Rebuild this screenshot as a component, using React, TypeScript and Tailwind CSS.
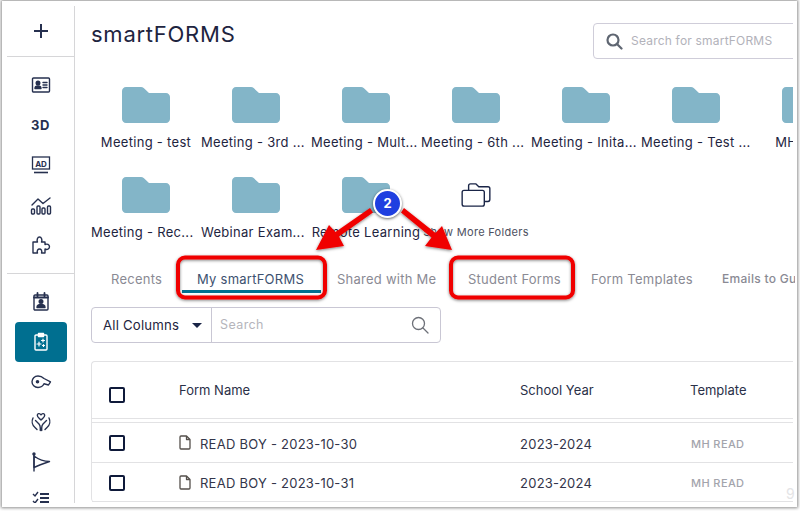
import React from "react";

const FONT = "font-['Inter','Liberation_Sans',sans-serif]";

function Folder() {
  return (
    <svg width="48" height="36" viewBox="0 0 48 36" className="block">
      <path d="M4 0H19C20 0 21 .4 21.700 1.100L27 6H44C46.200 6 48 7.800 48 10V32C48 34.200 46.200 36 44 36H4C1.800 36 0 34.200 0 32V4C0 1.800 1.800 0 4 0Z" fill="#83b5c8" />
    </svg>
  );
}

function FolderCell({ label, cut }: { label: string; cut?: boolean }) {
  return (
    <div className="w-[110px] shrink-0 h-[90px] flex flex-col items-center pt-[2px]">
      <Folder />
      <div className={"mt-[10px] text-[13px] leading-[18px] tracking-[0.3px] text-[#1e2440] whitespace-nowrap " + (cut ? "self-start" : "")}>{label}</div>
    </div>
  );
}

const navy = "#26304f";

function Ico({ children, w = 22, h = 22, color = navy }: { children: React.ReactNode; w?: number; h?: number; color?: string }) {
  return (
    <svg width={w} height={h} viewBox="0 0 22 22" fill="none" stroke={color} strokeWidth="1.4" strokeLinecap="round" strokeLinejoin="round">
      {children}
    </svg>
  );
}

function NavItem({ children, active }: { children: React.ReactNode; active?: boolean }) {
  return (
    <div className={active ? "w-[52px] h-[40px] shrink-0 rounded-[4px] bg-[#006f90] flex items-center justify-center" : "w-[52px] h-[40px] shrink-0 flex items-center justify-center"}>
      {children}
    </div>
  );
}

function Checkbox() {
  return <div className="w-[16px] h-[16px] rounded-[2px] border-2 border-[#0f1a3a] bg-white shrink-0" />;
}

function Row({ date, last }: { date: string; last?: boolean }) {
  return (
    <div className={"h-[40px] flex items-center border-t border-[#e2e2e4] " + (last ? "border-b" : "")}>
      <div className="w-[87px] shrink-0 pl-[17px] mt-[1px]"><Checkbox /></div>
      <div className="w-[341px] shrink-0 flex items-center pt-[4px] text-[13px] tracking-[0.25px] text-[#33354a]">
        <svg width="12" height="15" viewBox="0 0 12 15" fill="none" stroke="#55504c" strokeWidth="1.3" className="mr-[9px] -mt-[4px]" strokeLinejoin="round">
          <path d="M1 2C1 1.400 1.400 1 2 1H7.500L11 4.500V13C11 13.600 10.600 14 10 14H2C1.400 14 1 13.600 1 13Z" />
          <path d="M7.500 1V4.500H11" />
        </svg>
        READ BOY - {date}
      </div>
      <div className="w-[170px] shrink-0 pt-[4px] text-[13px] tracking-[0.25px] text-[#33354a]">2023-2024</div>
      <div className="pt-[3px] pl-[1px] text-[11px] tracking-[0.4px] font-medium text-[#a3a4ac]">MH READ</div>
    </div>
  );
}

export default function App() {
  return (
    <div className={"relative w-[800px] h-[511px] overflow-hidden bg-white " + FONT}>
      <div className="ml-[2px] mt-[1px] w-[795px] h-[506px] bg-white flex shadow-[0_0_3px_1px_rgba(0,0,0,0.45)] overflow-hidden">
        {/* Sidebar */}
        <aside className="w-[73px] shrink-0 pt-[5px] pb-[4px] pl-[5px] flex flex-col">
          <div className="flex-1 border-r border-[#d6d6d8] flex flex-col items-center overflow-hidden">
            <div className="h-[51px] w-full flex items-center justify-center shrink-0 border-b border-[#d6d6d8]">
              <svg width="14" height="14" viewBox="0 0 14 14" stroke="#26304f" strokeWidth="2"><path d="M7 0V14M0 7H14" /></svg>
            </div>
            <div className="flex flex-col items-center pt-[8px] h-[217px] w-full shrink-0 border-b border-[#d6d6d8]">
              <NavItem>
                <Ico>
                  <rect x="2.500" y="4" width="17" height="14" rx="1" />
                  <circle cx="8" cy="9" r="1.800" fill={navy} />
                  <path d="M5 14.500C5 12.500 6.500 12 8 12S11 12.500 11 14.500Z" fill={navy} />
                  <path d="M13 8.500H17M13 11H17M13 13.500H17" />
                </Ico>
              </NavItem>
              <NavItem><span className="text-[13px] font-bold tracking-[0.6px] text-[#26304f] mt-[1px]">3D</span></NavItem>
              <NavItem>
                <svg width="20" height="20" viewBox="0 0 20 20" fill="none" stroke={navy} strokeWidth="1.300">
                  <rect x="1.500" y="2" width="17" height="12" />
                  <path d="M3 17.500H17" strokeWidth="1.600" />
                  <text x="10" y="11.500" textAnchor="middle" fontSize="8" fontWeight="700" fill={navy} stroke="none" fontFamily="Inter">AD</text>
                </svg>
              </NavItem>
              <NavItem>
                <Ico>
                  <rect x="1.500" y="15" width="3" height="5" rx="1" />
                  <rect x="7" y="12" width="3" height="8" rx="1" />
                  <rect x="12" y="14" width="3" height="6" rx="1" />
                  <rect x="17.500" y="12" width="3" height="8" rx="1" />
                  <path d="M2 11L8 5L13 9.500L20 4" />
                </Ico>
              </NavItem>
              <NavItem>
                <Ico>
                  <path d="M3 19V8H7.500C6.500 6 7.500 3 9.500 3S12.500 6 11.500 8H15V10.500C17 9.500 19.500 10.500 19.500 12.800S17 16 15 15V19H11.500C12.500 16.500 11 15 9.500 15S6.500 16.500 7.500 19Z" />
                </Ico>
              </NavItem>
            </div>
            <div className="flex flex-col items-center pt-[8px] w-full">
              <NavItem>
                <Ico>
                  <rect x="4" y="4" width="14" height="15" rx="1" />
                  <path d="M7.500 2V5M14.500 2V5M4 6.500H18" strokeWidth="1.800" />
                  <circle cx="11" cy="10.500" r="1.800" fill={navy} />
                  <path d="M7 16.500C7 14 9 13.500 11 13.500S15 14 15 16.500Z" fill={navy} />
                </Ico>
              </NavItem>
              <NavItem active>
                <Ico color="#ffffff">
                  <rect x="5" y="4" width="12" height="15" rx="1" />
                  <rect x="8.500" y="2.500" width="5" height="3" fill="#fff" />
                  <path d="M13 8V11M11.500 9.500H14.500M9 11V15M7 13H11M13.500 13.500V15.500M12.500 14.500H14.500" strokeWidth="1.200" />
                </Ico>
              </NavItem>
              <NavItem>
                <Ico>
                  <path d="M8 5C11 5 12.500 6 14 7.500L20.500 10.800L18.500 14L14 12.800C13 15 11 16.500 8 16.500C4.500 16.500 2 14 2 10.800S4.500 5 8 5Z" />
                  <circle cx="7.500" cy="10.800" r="1.100" fill={navy} />
                </Ico>
              </NavItem>
              <NavItem>
                <Ico>
                  <path d="M11 9C9.500 7.500 7.300 6.500 7.300 4.300C7.300 2.500 9.700 1.800 11 3.800C12.300 1.800 14.700 2.500 14.700 4.300C14.700 6.500 12.500 7.500 11 9Z" />
                  <path d="M3 7C1.500 10 2 14 5 16.500L7 18.500M5.500 9.500L9 13C10.200 14.300 10.300 15.500 10.300 17V19.500" />
                  <path d="M19 7C20.500 10 20 14 17 16.500L15 18.500M16.500 9.500L13 13C11.800 14.300 11.700 15.500 11.700 17V19.500" />
                </Ico>
              </NavItem>
              <NavItem>
                <Ico>
                  <path d="M4 3V20" />
                  <circle cx="4" cy="3" r="1" fill={navy} />
                  <path d="M4 5C8 8 13 10.500 19.500 10.500C15 12 9 14 4 16.500Z" />
                </Ico>
              </NavItem>
              <div className="h-[20px] w-full shrink-0 flex justify-center pt-[9px]">
                <svg width="18" height="14" viewBox="0 0 18 14" fill="none" stroke={navy} strokeWidth="1.400" className="shrink-0">
                  <path d="M1 3L3 5L6 1M1 10L3 12L6 8" />
                  <path d="M8 3H17M8 7H17M8 11H17" strokeWidth="1.800" />
                </svg>
              </div>
            </div>
          </div>
        </aside>

        {/* Main */}
        <main className="w-[720px] shrink-0 overflow-hidden pl-[16px] flex flex-col">
          <div className="w-[702px] shrink-0 overflow-hidden">
            <header className="h-[84px] flex items-start">
              <h1 className="mt-[18px] w-[502px] shrink-0 text-[22px] leading-[30px] tracking-[0.75px] text-[#1e2440] font-normal">smartFORMS</h1>
              <div className="mt-[22px] w-[215px] h-[36px] shrink-0 border border-[#cfcdd9] rounded-[4px] flex items-center pl-[12px]">
                <svg width="17" height="17" viewBox="0 0 17 17" fill="none" stroke="#5f6672" strokeWidth="2.200" strokeLinecap="round" className="mr-[8px]">
                  <circle cx="7" cy="7" r="5.500" />
                  <path d="M11 11L15.500 15.500" />
                </svg>
                <span className="text-[12px] tracking-[0.2px] text-[#b2b2ba] whitespace-nowrap">Search for smartFORMS</span>
              </div>
            </header>

            <section className="flex">
              <FolderCell label="Meeting - test" />
              <FolderCell cut label="Meeting - 3rd ..." />
              <FolderCell cut label="Meeting - Mult..." />
              <FolderCell cut label="Meeting - 6th ..." />
              <FolderCell cut label="Meeting - Inita..." />
              <FolderCell cut label="Meeting - Test ..." />
              <FolderCell label="MH READ" />
            </section>
            <section className="flex">
              <FolderCell cut label="Meeting - Rec..." />
              <FolderCell cut label="Webinar Exam..." />
              <FolderCell label="Remote Learning" />
              <div className="w-[110px] h-[90px] shrink-0 flex flex-col items-center pt-[8px]">
                <svg width="30" height="24" viewBox="0 0 32 26" fill="none" stroke="#1a2547" strokeWidth="1.500" strokeLinejoin="round">
                  <path d="M8 8V3C8 2 9 1 10 1H16L19 4H29C30 4 31 5 31 6V18C31 19 30 20 29 20H25" />
                  <path d="M3 8H23C24 8 25 9 25 10V23C25 24 24 25 23 25H3C2 25 1 24 1 23V10C1 9 2 8 3 8Z" />
                </svg>
                <div className="mt-[17px] text-[11px] leading-[16px] tracking-[0.3px] text-[#4d5060] whitespace-nowrap">Show More Folders</div>
              </div>
            </section>
          </div>

          <nav className="h-[47px] shrink-0 flex items-start text-[13px] tracking-[0.25px] text-[#8a8a94] whitespace-nowrap -mt-[5px] ml-[4px]">
            <div className="h-[33px] w-[82px] shrink-0 pt-[10px] pl-[16px]">Recents</div>
            <div className="h-[33px] w-[139px] shrink-0 pt-[10px] pl-[15px] ml-[5px] border-b-[3px] border-[#006f90] text-[#3d5270]">My smartFORMS</div>
            <div className="h-[33px] w-[131px] shrink-0 pt-[10px] pl-[16px]">Shared with Me</div>
            <div className="h-[33px] w-[123px] shrink-0 pt-[10px] pl-[16px]">Student Forms</div>
            <div className="h-[33px] w-[131px] shrink-0 pt-[10px] pl-[16px]">Form Templates</div>
            <div className="h-[33px] shrink-0 pt-[10px] pl-[16px] text-[12px] font-medium tracking-[0.3px]">Emails to Guardians</div>
          </nav>

          <div className="w-[350px] h-[36px] shrink-0 border border-[#c9c7d4] rounded-[4px] flex items-center">
            <div className="w-[120px] h-full shrink-0 border-r border-[#c9c7d4] flex items-center pl-[11px]">
              <span className="pt-[1px] text-[13.200px] tracking-[0.2px] text-[#1e2440]">All Columns</span>
              <svg width="10" height="5" viewBox="0 0 10 5" className="ml-[13px]"><path d="M0 0H10L5 5Z" fill="#1a2547" /></svg>
            </div>
            <span className="ml-[8px] pt-[1px] flex-1 text-[12.500px] tracking-[0.4px] text-[#b5b5bc]">Search</span>
            <svg width="18" height="18" viewBox="0 0 18 18" fill="none" stroke="#6d7078" strokeWidth="1.300" strokeLinecap="round" className="mr-[11px]">
              <circle cx="7.500" cy="7.500" r="6" />
              <path d="M12 12L17 17" />
            </svg>
          </div>

          <div className="mt-[18px] w-[702px] shrink-0 border-l border-[#e2e2e4] rounded-l-[4px] border-t">
            <div className="h-[57px] flex items-center border-b border-[#e2e2e4] text-[13px] text-[#2a3048]">
              <div className="w-[87px] shrink-0 pl-[17px] mt-[9px]"><Checkbox /></div>
              <div className="w-[341px] shrink-0 pt-[2px]">Form Name</div>
              <div className="w-[170px] shrink-0 pt-[2px]">School Year</div>
              <div className="pt-[2px]">Template</div>
            </div>
            <div className="h-[3px]" />
            <Row date="2023-10-30" />
            <Row date="2023-10-31" last />
          </div>
        </main>
      </div>

      <div className="absolute left-[786px] top-[483px] text-[14px] text-[#e4e4e6]">9</div>

      {/* Annotations */}
      <svg width="800" height="511" viewBox="0 0 800 511" className="absolute inset-0 pointer-events-none">
        <defs>
          <filter id="sh" x="-20%" y="-20%" width="140%" height="140%">
            <feDropShadow dx="0" dy="1" stdDeviation="1.500" floodColor="#000" floodOpacity="0.5" />
          </filter>
        </defs>
        <g filter="url(#sh)">
          <rect x="178" y="257.500" width="147" height="40" rx="7" fill="none" stroke="#f00000" strokeWidth="4" />
          <rect x="451" y="257.500" width="122" height="40" rx="7" fill="none" stroke="#f00000" strokeWidth="4" />
          <path d="M316 250L329 225L335.500 232L370 208L373 212.500L339 236.500L344 246Z" fill="#f00000" />
          <path d="M452 250L442 226L435.500 233L404 208L401 212.500L431.500 237.500L425 246Z" fill="#f00000" />
        </g>
      </svg>
      <div className="absolute left-[373px] top-[189px] w-[29px] h-[29px] rounded-full bg-[#1f3fe0] border-2 border-white shadow-[0_1px_3px_rgba(0,0,0,0.6)] flex items-center justify-center text-white text-[13px] font-bold">2</div>
    </div>
  );
}
